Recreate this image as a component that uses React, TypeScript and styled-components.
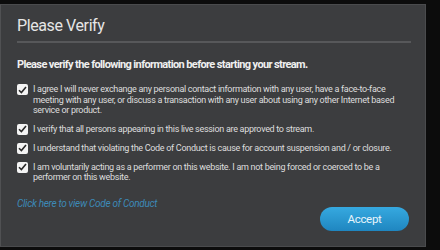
import React from "react";
import styled, { createGlobalStyle } from "styled-components";

const Global = createGlobalStyle`
  html, body { margin: 0; padding: 0; background: #0c0c0c; }
  body { font-family: Roboto, "Liberation Sans", Arial, sans-serif; }
`;

const Stage = styled.div`
  width: 440px;
  height: 250px;
  background: #0c0c0c;
  padding: 4px 0 0 0;
  box-sizing: border-box;
`;

const Dialog = styled.div`
  width: 426px;
  height: 243px;
  box-sizing: border-box;
  background: #3c3d3f;
  border: 1px solid #4a4b4d;
  border-left-color: #505153;
  padding: 0 14px 0 16px;
  display: flex;
  flex-direction: column;
`;

const Title = styled.h1`
  margin: 0;
  padding: 11px 0 0 0;
  height: 38px;
  box-sizing: border-box;
  font-size: 16px;
  font-weight: 400;
  letter-spacing: -0.4px;
  color: #e6e6e6;
  border-bottom: 2px solid #57585a;
`;

const Lead = styled.p`
  margin: 15px 0 0 0;
  font-size: 11px;
  font-weight: 700;
  letter-spacing: -0.62px;
  color: #f0f0f0;
`;

const List = styled.ul`
  list-style: none;
  margin: 13px 0 0 0;
  padding: 0;
  display: flex;
  flex-direction: column;
  gap: 8px;
`;

const Item = styled.li`
  display: flex;
  align-items: flex-start;
  gap: 5px;
`;

const Box = styled.span`
  flex: 0 0 11px;
  width: 11px;
  height: 11px;
  background: #f4f4f4;
  border-radius: 2px;
  display: flex;
  align-items: center;
  justify-content: center;
`;

const Text = styled.span`
  font-size: 9px;
  line-height: 10.5px;
  letter-spacing: -0.3px;
  color: #dedede;
`;

const Footer = styled.div`
  margin-top: 15px;
  display: flex;
  justify-content: space-between;
  align-items: flex-start;
  padding-right: 2px;
`;

const Link = styled.a`
  font-size: 10px;
  line-height: 12px;
  font-style: italic;
  letter-spacing: -0.3px;
  color: #3d8ab8;
  text-decoration: none;
  cursor: pointer;
`;

const Button = styled.button`
  margin-top: 9px;
  width: 89px;
  height: 24px;
  border: none;
  border-radius: 12px;
  background: linear-gradient(#36a9e0, #1f86c0);
  color: #e8f4fb;
  font-family: Roboto, "Liberation Sans", Arial, sans-serif;
  font-size: 11.5px;
  letter-spacing: -0.3px;
  cursor: pointer;
`;

const Check = () => (
  <svg width="9" height="8" viewBox="0 0 9 8">
    <path d="M1 4.2 L3.4 6.6 L8 1" fill="none" stroke="#2a2a2a" strokeWidth="1.6" />
  </svg>
);

const items = [
  "I agree I will never exchange any personal contact information with any user, have a face-to-face meeting with any user, or discuss a transaction with any user about using any other Internet based service or product.",
  "I verify that all persons appearing in this live session are approved to stream.",
  "I understand that violating the Code of Conduct is cause for account suspension and / or closure.",
  "I am voluntarily acting as a performer on this website. I am not being forced or coerced to be a performer on this website.",
];

export default function App() {
  return (
    <>
      <Global />
      <Stage>
        <Dialog>
          <Title>Please Verify</Title>
          <Lead>Please verify the following information before starting your stream.</Lead>
          <List>
            {items.map((t) => (
              <Item key={t}>
                <Box>
                  <Check />
                </Box>
                <Text>{t}</Text>
              </Item>
            ))}
          </List>
          <Footer>
            <Link>Click here to view Code of Conduct</Link>
            <Button>Accept</Button>
          </Footer>
        </Dialog>
      </Stage>
    </>
  );
}
